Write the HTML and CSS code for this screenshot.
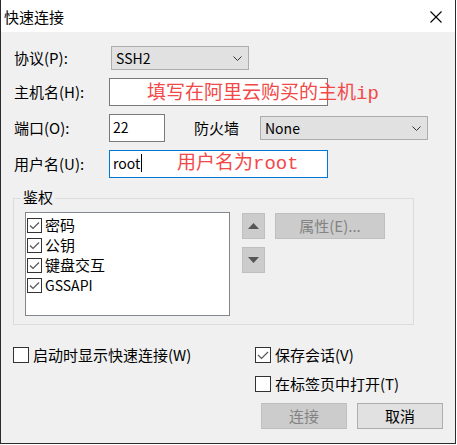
FILE: index.html
```html
<!DOCTYPE html>
<html lang="zh-CN">
<head>
<meta charset="utf-8">
<title>快速连接</title>
<link rel="stylesheet" href="styles.css">
</head>
<body>
<div class="window">
  <div class="titlebar">
    <span class="title">快速连接</span>
    <span class="close">
      <svg width="12" height="12" viewBox="0 0 12 12"><path d="M0.5 0.5 L11.5 11.5 M11.5 0.5 L0.5 11.5" stroke="#000" stroke-width="1.1" fill="none"/></svg>
    </span>
  </div>
  <div class="content">
    <div class="form-row row-proto">
      <span class="lbl">协议(P):</span>
      <div class="select sel-proto"><span class="sel-text">SSH2</span>
        <svg class="chev" width="9" height="5" viewBox="0 0 9 5"><path d="M0.5 0.5 L4.5 4.5 L8.5 0.5" stroke="#333" fill="none"/></svg>
      </div>
    </div>
    <div class="form-row">
      <span class="lbl">主机名(H):</span>
      <div class="input wide"><span class="note note-host">填写在阿里云购买的主机ip</span></div>
    </div>
    <div class="form-row">
      <span class="lbl">端口(O):</span>
      <div class="input port">22</div>
      <span class="fw-lbl">防火墙</span>
      <div class="select sel-fw"><span class="sel-text">None</span>
        <svg class="chev" width="9" height="5" viewBox="0 0 9 5"><path d="M0.5 0.5 L4.5 4.5 L8.5 0.5" stroke="#333" fill="none"/></svg>
      </div>
    </div>
    <div class="form-row">
      <span class="lbl">用户名(U):</span>
      <div class="input wide focused">root<span class="caret"></span><span class="note note-user">用户名为root</span></div>
    </div>

    <div class="group">
      <span class="legend">鉴权</span>
      <div class="listbox">
        <div class="li"><span class="cb small checked"><svg width="13" height="13" viewBox="0 0 13 13"><path d="M2 6.5 L5 9.5 L11 3.5" stroke="#555" stroke-width="1.2" fill="none"/></svg></span>密码</div>
        <div class="li"><span class="cb small checked"><svg width="13" height="13" viewBox="0 0 13 13"><path d="M2 6.5 L5 9.5 L11 3.5" stroke="#555" stroke-width="1.2" fill="none"/></svg></span>公钥</div>
        <div class="li"><span class="cb small checked"><svg width="13" height="13" viewBox="0 0 13 13"><path d="M2 6.5 L5 9.5 L11 3.5" stroke="#555" stroke-width="1.2" fill="none"/></svg></span>键盘交互</div>
        <div class="li"><span class="cb small checked"><svg width="13" height="13" viewBox="0 0 13 13"><path d="M2 6.5 L5 9.5 L11 3.5" stroke="#555" stroke-width="1.2" fill="none"/></svg></span><span class="latin">GSSAPI</span></div>
      </div>
      <div class="arrows">
        <div class="abtn"><svg width="11" height="6" viewBox="0 0 11 6"><path d="M5.5 0 L11 6 L0 6 Z" fill="#555"/></svg></div>
        <div class="abtn"><svg width="11" height="6" viewBox="0 0 11 6"><path d="M0 0 L11 0 L5.5 6 Z" fill="#555"/></svg></div>
      </div>
      <div class="btn disabled prop">属性(E)...</div>
    </div>

    <div class="options">
      <div class="opt-left">
        <label class="opt"><span class="cb"></span>启动时显示快速连接(W)</label>
      </div>
      <div class="opt-right">
        <label class="opt"><span class="cb checked"><svg width="14" height="14" viewBox="0 0 14 14"><path d="M2 7 L5.5 10.5 L12 4" stroke="#555" stroke-width="1.2" fill="none"/></svg></span>保存会话(V)</label>
        <label class="opt"><span class="cb"></span>在标签页中打开(T)</label>
      </div>
    </div>

    <div class="buttons">
      <div class="btn disabled">连接</div>
      <div class="btn">取消</div>
    </div>
  </div>
</div>
</body>
</html>
```

FILE: styles.css
```css
* { box-sizing: border-box; }

body {
  margin: 0;
  background: #fff;
  font-family: "Noto Sans CJK SC", "Noto Sans", sans-serif;
  font-size: 15px;
  line-height: 20px;
  color: #000;
}

.window {
  width: 456px;
  height: 444px;
  border: 1px solid #2b2b2b;
  border-top: none;
  display: flex;
  flex-direction: column;
}

.titlebar {
  height: 32px;
  flex: none;
  background: #fff;
  display: flex;
  align-items: center;
  justify-content: space-between;
  padding-left: 3px;
  padding-right: 13px;
}

.title { font-size: 15px; padding-top: 1px; }

.close { display: flex; margin-top: 1px; }

.content {
  flex: 1;
  background: #f0f0f0;
  padding: 14px 12px 0 12px;
}

.form-row {
  display: flex;
  align-items: center;
  height: 28px;
  margin-bottom: 8px;
}

.row-proto { height: 24px; }

.lbl {
  width: 96px;
  padding-left: 1px;
  flex: none;
}

.select {
  height: 24px;
  border: 1px solid #adadad;
  background: #e1e1e1;
  display: flex;
  align-items: center;
  justify-content: space-between;
  padding-left: 4px;
  padding-right: 6px;
}

.sel-proto { width: 138px; margin-left: 2px; }
.sel-fw { width: 168px; }

.sel-text { font-size: 14px; }

.chev { display: block; }

.fw-lbl {
  margin-left: 29px;
  width: 66px;
}

.input {
  position: relative;
  height: 28px;
  border: 1px solid #7a7a7a;
  background: #fff;
  padding-left: 3px;
  display: flex;
  align-items: center;
  padding-bottom: 3px;
  font-size: 14px;
}

.wide { width: 219px; }
.port { width: 56px; }

.focused { border-color: #0078d7; }

.caret {
  display: inline-block;
  width: 1px;
  height: 18px;
  background: #000;
  margin-left: 1px;
}

.note {
  position: absolute;
  font-family: "Liberation Mono", "Noto Sans CJK SC", monospace;
  font-size: 19px;
  line-height: 19px;
  color: #f24848;
  white-space: nowrap;
}

.note-host { left: 37px; top: 6px; }
.note-user { left: 67px; top: 4px; }

.group {
  position: relative;
  margin-top: 20px;
  width: 401px;
  height: 127px;
  border: 1px solid #dcdcdc;
  display: flex;
  align-items: flex-start;
  padding: 13px 0 0 11px;
}

.legend {
  position: absolute;
  left: 7px;
  top: -12px;
  padding: 0 2px;
  background: #f0f0f0;
  line-height: 20px;
}

.listbox {
  width: 205px;
  height: 104px;
  border: 1px solid #828790;
  background: #fff;
  padding: 2px 0 0 1px;
}

.li {
  height: 20px;
  display: flex;
  align-items: center;
  gap: 3px;
}

.latin { font-size: 14px; }

.cb {
  width: 16px;
  height: 16px;
  border: 1px solid #333;
  background: #fff;
  display: flex;
  align-items: center;
  justify-content: center;
  flex: none;
}

.cb.small { width: 15px; height: 15px; }

.arrows {
  margin-left: 12px;
  margin-top: 1px;
  display: flex;
  flex-direction: column;
  gap: 8px;
}

.abtn {
  width: 23px;
  height: 26px;
  background: #cccccc;
  border: 1px solid #bfbfbf;
  display: flex;
  align-items: center;
  justify-content: center;
}

.btn {
  width: 86px;
  height: 26px;
  background: #e1e1e1;
  border: 1px solid #adadad;
  display: flex;
  align-items: center;
  justify-content: center;
}

.btn.disabled {
  background: #cccccc;
  border-color: #bfbfbf;
  color: #838383;
}

.prop {
  width: 110px;
  margin-left: 10px;
  margin-top: 1px;
}

.options {
  display: flex;
  margin-top: 22px;
}

.opt-left { width: 242px; }

.opt-right {
  display: flex;
  flex-direction: column;
  gap: 13px;
}

.opt {
  display: flex;
  align-items: center;
  height: 16px;
  gap: 4px;
  white-space: nowrap;
}

.buttons {
  display: flex;
  justify-content: flex-end;
  gap: 10px;
  margin-top: 11px;
}
```
